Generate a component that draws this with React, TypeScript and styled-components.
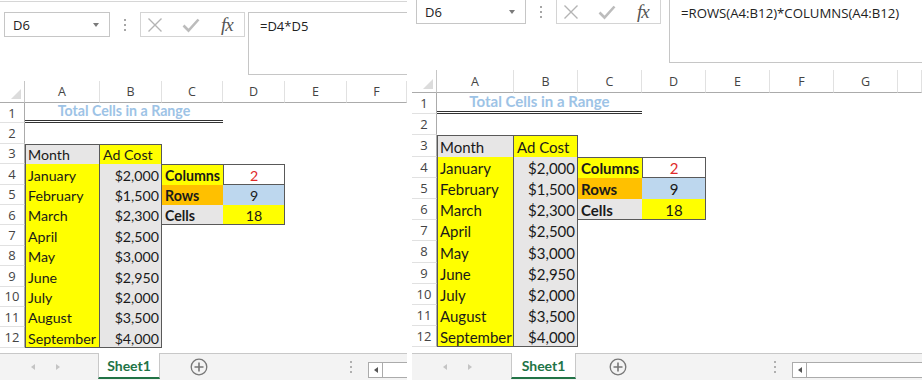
import * as React from 'react';
import styled, { createGlobalStyle } from 'styled-components';

const GlobalStyle = createGlobalStyle`
  html, body { margin: 0; padding: 0; background: #fff; }
  body {
    width: 922px;
    height: 380px;
    overflow: hidden;
    font-family: Lato, "Open Sans", sans-serif;
    color: #222;
  }
`;

const YELLOW = '#ffff00';
const GREY = '#e7e6e6';
const ORANGE = '#ffc000';
const BLUE = '#bdd7ee';
const EDGE = '#595959';

interface Metrics {
  width: number;
  cropTop: number;
  barTop: number;
  nameW: number;
  boxH: number;
  dotsW: number;
  fxW: number;
  gap: number;
  formulaH: number;
  formulaFont: number;
  headGap: number;
  headH: number;
  rowH: number;
  font: number;
  cols: number[];
  letters: string[];
  tabLeft: number;
  tabW: number;
  plusLeft: number;
  dotsLeft: number;
  scrollW: number;
}

const Page = styled.div`
  display: flex;
  gap: 5px;
  width: 922px;
  height: 380px;
  overflow: hidden;
`;

const Window = styled.div<{ $w: number }>`
  display: flex;
  flex-direction: column;
  width: ${p => p.$w}px;
  flex: none;
  height: 380px;
  overflow: hidden;
  background: #fff;
`;

const RibbonEdge = styled.div<{ $crop: number }>`
  height: ${p => (p.$crop ? 0 : 1)}px;
  border-bottom: ${p => (p.$crop ? 'none' : '1px solid #d6d6d6')};
  flex: none;
`;

const FormulaBar = styled.div<{ $top: number; $h: number; $gap: number }>`
  display: flex;
  align-items: flex-start;
  padding-left: 4px;
  margin-top: ${p => p.$top}px;
  height: ${p => p.$h}px;
  flex: none;
  & > :last-child { margin-left: ${p => p.$gap}px; }
`;

const NameBox = styled.div<{ $w: number; $h: number }>`
  position: relative;
  box-sizing: border-box;
  width: ${p => p.$w}px;
  height: ${p => p.$h}px;
  border: 1px solid #c6c6c6;
  display: flex;
  align-items: center;
  padding-left: 8px;
  font-family: "Open Sans", Lato, sans-serif;
  font-size: 13px;
  color: #222;
  flex: none;
`;

const DropCaret = styled.span`
  position: absolute;
  right: 10px;
  top: 50%;
  margin-top: -2px;
  border-left: 3.5px solid transparent;
  border-right: 3.5px solid transparent;
  border-top: 4px solid #7a7a7a;
`;

const Dots = styled.div<{ $w: number; $h: number }>`
  width: ${p => p.$w}px;
  height: ${p => p.$h}px;
  display: flex;
  flex-direction: column;
  align-items: center;
  justify-content: center;
  gap: 3px;
  flex: none;
  span {
    width: 2px;
    height: 2px;
    background: #a6a6a6;
  }
`;

const FxBox = styled.div<{ $w: number; $h: number }>`
  box-sizing: border-box;
  width: ${p => p.$w}px;
  height: ${p => p.$h}px;
  border: 1px solid #d4d4d4;
  display: flex;
  align-items: center;
  padding-left: 6px;
  gap: 19px;
  flex: none;
`;

const FxText = styled.span`
  font-family: "Liberation Serif", "DejaVu Serif", serif;
  font-style: italic;
  font-size: 19px;
  color: #555;
  letter-spacing: -1px;
  margin-left: 2px;
`;

const FormulaBox = styled.div<{ $h: number; $font: number }>`
  box-sizing: border-box;
  flex: 1;
  height: ${p => p.$h}px;
  border: 1px solid #c6c6c6;
  border-right: none;
  padding: 4px 0 0 11px;
  font-family: "Open Sans", Lato, sans-serif;
  font-size: ${p => p.$font}px;
  color: #222;
  white-space: nowrap;
`;

const Sheet = styled.div<{ $cols: string; $headH: number; $rowH: number; $gap: number; $font: number }>`
  display: grid;
  grid-template-columns: ${p => p.$cols};
  grid-template-rows: ${p => p.$headH}px repeat(12, ${p => p.$rowH}px);
  margin-top: ${p => p.$gap}px;
  font-size: ${p => p.$font}px;
  flex: none;
`;

const Corner = styled.div`
  position: relative;
  border-right: 1px solid #c6c6c6;
  border-bottom: 1px solid #ababab;
  box-sizing: border-box;
  &::after {
    content: '';
    position: absolute;
    right: 3px;
    bottom: 3px;
    border-left: 10px solid transparent;
    border-bottom: 10px solid #dcdcdc;
  }
`;

const ColHead = styled.div`
  box-sizing: border-box;
  border-right: 1px solid #e1e1e1;
  border-bottom: 1px solid #ababab;
  display: flex;
  align-items: center;
  justify-content: center;
  font-family: "Open Sans", Lato, sans-serif;
  font-size: 12.5px;
  color: #444;
`;

const RowHead = styled.div`
  box-sizing: border-box;
  border-right: 1px solid #ababab;
  border-bottom: 1px solid #e1e1e1;
  display: flex;
  align-items: center;
  justify-content: center;
  font-family: "Open Sans", Lato, sans-serif;
  font-size: 13px;
  color: #444;
`;

interface Edges { t?: boolean; r?: boolean; b?: boolean; l?: boolean }

const edgeShadow = (e: Edges) => {
  const s: string[] = [];
  if (e.t) s.push(`inset 0 1px 0 ${EDGE}`);
  if (e.r) s.push(`inset -1px 0 0 ${EDGE}`);
  if (e.b) s.push(`inset 0 -1px 0 ${EDGE}`);
  if (e.l) s.push(`inset 1px 0 0 ${EDGE}`);
  return s.length ? s.join(', ') : 'none';
};

const Cell = styled.div<{ $bg?: string; $bold?: boolean; $align?: string; $color?: string; $edges?: Edges }>`
  box-sizing: border-box;
  display: flex;
  align-items: flex-end;
  justify-content: ${p => p.$align || 'flex-start'};
  padding: 0 3px 1px 3px;
  background: ${p => p.$bg || 'transparent'};
  font-weight: ${p => (p.$bold ? 700 : 400)};
  color: ${p => p.$color || '#1a1a1a'};
  box-shadow: ${p => edgeShadow(p.$edges || {})};
  white-space: nowrap;
  overflow: visible;
`;

const Title = styled.div`
  grid-column: span 3;
  display: flex;
  align-items: flex-end;
  justify-content: center;
  padding-bottom: 1px;
  border-bottom: 3px double #333;
  box-sizing: border-box;
  font-weight: 700;
  color: #9dc3e6;
`;

const TabBar = styled.div`
  margin-top: auto;
  position: relative;
  height: 27px;
  flex: none;
  box-sizing: border-box;
  border-top: 1px solid #c8c8c8;
  background: #f3f3f3;
  display: flex;
  align-items: stretch;
`;

const NavArrows = styled.div`
  width: 60px;
  display: flex;
  align-items: center;
  justify-content: flex-end;
  gap: 21px;
  flex: none;
`;

const Arrow = styled.span<{ $dir: 'l' | 'r' }>`
  width: 0;
  height: 0;
  border-top: 3.5px solid transparent;
  border-bottom: 3.5px solid transparent;
  ${p => (p.$dir === 'l' ? 'border-right: 4px solid #c4c4c4;' : 'border-left: 4px solid #c4c4c4;')}
`;

const SheetTab = styled.div<{ $left: number; $w: number }>`
  margin-left: ${p => p.$left}px;
  width: ${p => p.$w}px;
  margin-top: -1px;
  flex: none;
  box-sizing: border-box;
  background: #fff;
  border-left: 1px solid #c8c8c8;
  border-right: 1px solid #c8c8c8;
  border-bottom: 2px solid #217346;
  margin-bottom: 1px;
  display: flex;
  align-items: center;
  justify-content: center;
  font-family: Lato, sans-serif;
  font-weight: 700;
  font-size: 14px;
  color: #217346;
`;

const AddSheet = styled.div<{ $left: number }>`
  margin-left: ${p => p.$left}px;
  display: flex;
  align-items: center;
  flex: none;
`;

const TabDots = styled(Dots)<{ $left: number }>`
  margin-left: ${p => p.$left}px;
  span { background: #b0b0b0; }
`;

const ScrollBox = styled.div<{ $w: number }>`
  margin-top: 8px;
  margin-left: 12px;
  width: ${p => p.$w}px;
  height: 16px;
  box-sizing: border-box;
  border: 1px solid #ababab;
  border-right: none;
  background: #fff;
  display: flex;
  flex: none;
`;

const ScrollBtn = styled.div`
  width: 14px;
  box-sizing: border-box;
  border-right: 1px solid #ababab;
  display: flex;
  align-items: center;
  justify-content: center;
  background: #fff;
  &::before {
    content: '';
    border-top: 3px solid transparent;
    border-bottom: 3px solid transparent;
    border-right: 4px solid #555;
  }
`;

const months = ['January', 'February', 'March', 'April', 'May', 'June', 'July', 'August', 'September'];
const costs = ['$2,000', '$1,500', '$2,300', '$2,500', '$3,000', '$2,950', '$2,000', '$3,500', '$4,000'];
const summary = [
  { label: 'Columns', bg: YELLOW, value: '2', vbg: '#ffffff', vcolor: '#e02b2b' },
  { label: 'Rows', bg: ORANGE, value: '9', vbg: BLUE, vcolor: '#1a1a1a' },
  { label: 'Cells', bg: GREY, value: '18', vbg: YELLOW, vcolor: '#1a1a1a' },
];

const CrossIcon = () => (
  <svg width="16" height="16" viewBox="0 0 16 16">
    <path d="M1.5 1.5 L14.5 14.5 M14.5 1.5 L1.5 14.5" stroke="#b4b4b4" strokeWidth="1.4" fill="none" />
  </svg>
);

const CheckIcon = () => (
  <svg width="18" height="16" viewBox="0 0 18 16">
    <path d="M1.5 8.5 L6.5 13.5 L16.5 2.5" stroke="#bcbcbc" strokeWidth="2.6" fill="none" />
  </svg>
);

const PlusIcon = () => (
  <svg width="18" height="18" viewBox="0 0 18 18">
    <circle cx="9" cy="9" r="7.8" stroke="#777" strokeWidth="1.3" fill="none" />
    <path d="M9 4.5 V13.5 M4.5 9 H13.5" stroke="#777" strokeWidth="1.6" />
  </svg>
);

function rowCells(r: number, ncols: number): React.ReactNode[] {
  const out: React.ReactNode[] = [];
  let c = 0;
  if (r === 1) {
    out.push(<Title key="t">Total Cells in a Range</Title>);
    c = 3;
  } else if (r === 3) {
    out.push(<Cell key="a" $bg={GREY} $edges={{ t: true, l: true, r: true }}>Month</Cell>);
    out.push(<Cell key="b" $bg={YELLOW} $edges={{ t: true, r: true }}>Ad Cost</Cell>);
    c = 2;
  } else if (r >= 4) {
    const i = r - 4;
    const last = r === 12;
    out.push(<Cell key="a" $bg={YELLOW} $edges={{ l: true, r: true, b: last }}>{months[i]}</Cell>);
    out.push(<Cell key="b" $bg={GREY} $align="flex-end" $edges={{ r: true, b: last }}>{costs[i]}</Cell>);
    c = 2;
    if (r <= 6) {
      const s = summary[r - 4];
      out.push(<Cell key="c" $bg={s.bg} $bold $edges={{ t: r === 4, b: r === 6 }}>{s.label}</Cell>);
      out.push(
        <Cell key="d" $bg={s.vbg} $color={s.vcolor} $align="center" $edges={{ t: r === 4, r: true, b: r !== 5, l: r === 4 }}>
          {s.value}
        </Cell>
      );
      c = 4;
    }
  }
  for (; c < ncols; c++) out.push(<Cell key={'e' + c} />);
  return out;
}

const ExcelWindow: React.FC<{ m: Metrics; formula: string }> = ({ m, formula }) => {
  const cols = m.cols.map(w => `${w}px`).join(' ');
  const ncols = m.cols.length - 1;
  return (
    <Window $w={m.width}>
      <RibbonEdge $crop={m.cropTop} />
      <FormulaBar $top={m.barTop} $h={m.formulaH} $gap={m.gap}>
        <NameBox $w={m.nameW} $h={m.boxH}>
          D6
          <DropCaret />
        </NameBox>
        <Dots $w={m.dotsW} $h={m.boxH}>
          <span />
          <span />
          <span />
        </Dots>
        <FxBox $w={m.fxW} $h={m.boxH}>
          <CrossIcon />
          <CheckIcon />
          <FxText>fx</FxText>
        </FxBox>
        <FormulaBox $h={m.formulaH} $font={m.formulaFont}>
          {formula}
        </FormulaBox>
      </FormulaBar>
      <Sheet $cols={cols} $headH={m.headH} $rowH={m.rowH} $gap={m.headGap} $font={m.font}>
        <Corner />
        {m.letters.map(l => (
          <ColHead key={l}>{l}</ColHead>
        ))}
        {Array.from({ length: 12 }, (_, k) => k + 1).map(r => (
          <React.Fragment key={r}>
            <RowHead>{r}</RowHead>
            {rowCells(r, ncols)}
          </React.Fragment>
        ))}
      </Sheet>
      <TabBar>
        <NavArrows>
          <Arrow $dir="l" />
          <Arrow $dir="r" />
        </NavArrows>
        <SheetTab $left={m.tabLeft} $w={m.tabW}>Sheet1</SheetTab>
        <AddSheet $left={m.plusLeft}>
          <PlusIcon />
        </AddSheet>
        <TabDots $w={10} $h={26} $left={m.dotsLeft}>
          <span />
          <span />
          <span />
        </TabDots>
        <ScrollBox $w={m.scrollW}>
          <ScrollBtn />
        </ScrollBox>
      </TabBar>
    </Window>
  );
};

const leftMetrics: Metrics = {
  width: 407,
  cropTop: 0,
  barTop: 10,
  nameW: 106,
  boxH: 25,
  dotsW: 30,
  fxW: 105,
  gap: 3,
  formulaH: 63,
  formulaFont: 13,
  headGap: 6,
  headH: 22,
  rowH: 20.4,
  font: 14.2,
  cols: [25, 75, 62, 61, 62, 62, 60],
  letters: ['A', 'B', 'C', 'D', 'E', 'F'],
  tabLeft: 38,
  tabW: 62,
  plusLeft: 30,
  dotsLeft: 138,
  scrollW: 40,
};

const rightMetrics: Metrics = {
  width: 510,
  cropTop: 1,
  barTop: -1,
  nameW: 110,
  boxH: 25,
  dotsW: 30,
  fxW: 105,
  gap: 8,
  formulaH: 64,
  formulaFont: 13.2,
  headGap: 7,
  headH: 23,
  rowH: 21.2,
  font: 15,
  cols: [25, 77, 64, 64, 64, 64, 64, 64, 24],
  letters: ['A', 'B', 'C', 'D', 'E', 'F', 'G', ''],
  tabLeft: 39,
  tabW: 65,
  plusLeft: 33,
  dotsLeft: 143,
  scrollW: 140,
};

export default function App() {
  return (
    <>
      <GlobalStyle />
      <Page>
        <ExcelWindow m={leftMetrics} formula="=D4*D5" />
        <ExcelWindow m={rightMetrics} formula="=ROWS(A4:B12)*COLUMNS(A4:B12)" />
      </Page>
    </>
  );
}
